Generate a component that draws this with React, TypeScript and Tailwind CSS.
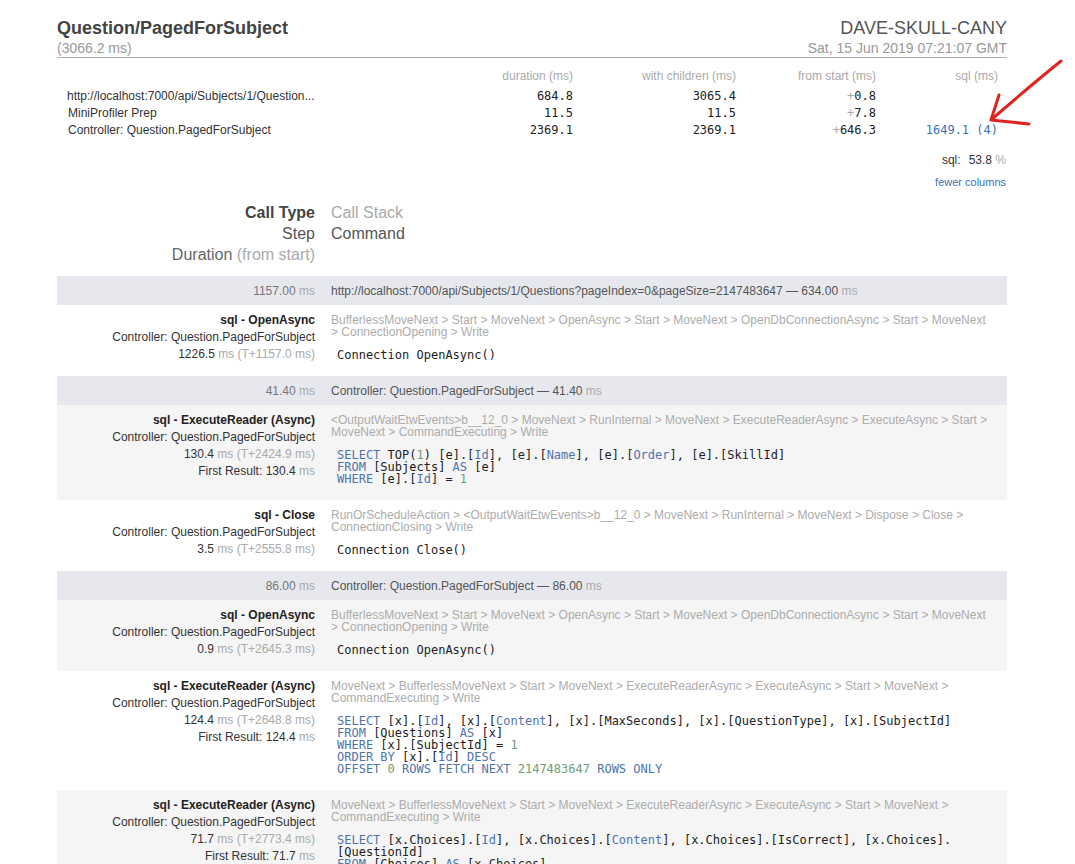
import React from "react";

const KW = new Set([
  "SELECT", "FROM", "AS", "WHERE", "ORDER", "BY", "DESC", "OFFSET", "ROWS", "FETCH", "NEXT", "ONLY",
  "Id", "Name", "Order", "Content",
]);

function CodeLine({ text }: { text: string }) {
  const parts = text.match(/[A-Za-z_]+|\d+|[^A-Za-z_\d]+/g) || [];
  return (
    <div className="whitespace-pre h-[12px]">
      {parts.map((p, i) =>
        KW.has(p) ? (
          <span key={i} className="text-[#4f74ab]">{p}</span>
        ) : /^\d+$/.test(p) ? (
          <span key={i} className="text-[#6f9d7c]">{p}</span>
        ) : (
          <span key={i}>{p}</span>
        )
      )}
    </div>
  );
}

type Header = { kind: "h"; left: string; right: string };
type Item = {
  kind: "i";
  type: string;
  dur: string;
  start: string;
  first?: string;
  stack: string[];
  code: string[];
};

const STACK_OPEN = [
  "BufferlessMoveNext > Start > MoveNext > OpenAsync > Start > MoveNext > OpenDbConnectionAsync > Start > MoveNext",
  "> ConnectionOpening > Write",
];
const STACK_EXEC = [
  "MoveNext > BufferlessMoveNext > Start > MoveNext > ExecuteReaderAsync > ExecuteAsync > Start > MoveNext >",
  "CommandExecuting > Write",
];

const rows: (Header | Item)[] = [
  {
    kind: "h",
    left: "1157.00",
    right: "http://localhost:7000/api/Subjects/1/Questions?pageIndex=0&pageSize=2147483647 \u2014 634.00",
  },
  {
    kind: "i",
    type: "sql - OpenAsync",
    dur: "1226.5",
    start: "T+1157.0",
    stack: STACK_OPEN,
    code: ["Connection OpenAsync()"],
  },
  { kind: "h", left: "41.40", right: "Controller: Question.PagedForSubject \u2014 41.40" },
  {
    kind: "i",
    type: "sql - ExecuteReader (Async)",
    dur: "130.4",
    start: "T+2424.9",
    first: "130.4",
    stack: [
      "<OutputWaitEtwEvents>b__12_0 > MoveNext > RunInternal > MoveNext > ExecuteReaderAsync > ExecuteAsync > Start >",
      "MoveNext > CommandExecuting > Write",
    ],
    code: [
      "SELECT TOP(1) [e].[Id], [e].[Name], [e].[Order], [e].[SkillId]",
      "FROM [Subjects] AS [e]",
      "WHERE [e].[Id] = 1",
    ],
  },
  {
    kind: "i",
    type: "sql - Close",
    dur: "3.5",
    start: "T+2555.8",
    stack: [
      "RunOrScheduleAction > <OutputWaitEtwEvents>b__12_0 > MoveNext > RunInternal > MoveNext > Dispose > Close >",
      "ConnectionClosing > Write",
    ],
    code: ["Connection Close()"],
  },
  { kind: "h", left: "86.00", right: "Controller: Question.PagedForSubject \u2014 86.00" },
  {
    kind: "i",
    type: "sql - OpenAsync",
    dur: "0.9",
    start: "T+2645.3",
    stack: STACK_OPEN,
    code: ["Connection OpenAsync()"],
  },
  {
    kind: "i",
    type: "sql - ExecuteReader (Async)",
    dur: "124.4",
    start: "T+2648.8",
    first: "124.4",
    stack: STACK_EXEC,
    code: [
      "SELECT [x].[Id], [x].[Content], [x].[MaxSeconds], [x].[QuestionType], [x].[SubjectId]",
      "FROM [Questions] AS [x]",
      "WHERE [x].[SubjectId] = 1",
      "ORDER BY [x].[Id] DESC",
      "OFFSET 0 ROWS FETCH NEXT 2147483647 ROWS ONLY",
    ],
  },
  {
    kind: "i",
    type: "sql - ExecuteReader (Async)",
    dur: "71.7",
    start: "T+2773.4",
    first: "71.7",
    stack: STACK_EXEC,
    code: [
      "SELECT [x.Choices].[Id], [x.Choices].[Content], [x.Choices].[IsCorrect], [x.Choices].",
      "[QuestionId]",
      "FROM [Choices] AS [x.Choices]",
      "INNER JOIN (",
      "    SELECT [x0].[Id]",
      "    FROM [Questions] AS [x0]",
    ],
  },
];

const mono = "font-['DejaVu_Sans_Mono','Liberation_Mono',monospace]";

export default function App() {
  let itemIdx = 0;
  return (
    <div className="relative min-h-screen bg-white font-['Liberation_Sans',Arial,sans-serif] text-[#333]">
      <div className="ml-[57px] w-[950px] pt-[17px] pb-[40px]">
        {/* header */}
        <div className="flex justify-between border-b border-[#a8a8a8]">
          <div>
            <div className="text-[18px] leading-[22px] font-bold text-[#444]">Question/PagedForSubject</div>
            <div className="text-[14px] leading-[18px] text-[#999]">(3066.2 ms)</div>
          </div>
          <div className="text-right">
            <div className="text-[18px] leading-[22px] text-[#555]">DAVE-SKULL-CANY</div>
            <div className="text-[14px] leading-[18px] text-[#999]">Sat, 15 Jun 2019 07:21:07 GMT</div>
          </div>
        </div>

        {/* summary table */}
        <div className="mt-[9px] pl-[10px] grid grid-cols-[416px_90px_163px_140px_122px] text-[12px]">
          <div className="leading-[18px] pb-[3px]"></div>
          <div className="leading-[18px] pb-[3px] text-right text-[#aaa]">duration (ms)</div>
          <div className="leading-[18px] pb-[3px] text-right text-[#aaa]">with children (ms)</div>
          <div className="leading-[18px] pb-[3px] text-right text-[#aaa]">from start (ms)</div>
          <div className="leading-[18px] pb-[3px] text-right text-[#aaa]">sql (ms)</div>

          <div className="leading-[17px] text-[#333]">http://localhost:7000/api/Subjects/1/Question...</div>
          <div className={`leading-[17px] text-right ${mono} text-[#222]`}>684.8</div>
          <div className={`leading-[17px] text-right ${mono} text-[#222]`}>3065.4</div>
          <div className={`leading-[17px] text-right ${mono} text-[#222]`}>
            <span className="text-[#aaa]">+</span>0.8
          </div>
          <div className="leading-[17px]"></div>

          <div className="leading-[17px] pl-[1px] text-[#333]">MiniProfiler Prep</div>
          <div className={`leading-[17px] text-right ${mono} text-[#222]`}>11.5</div>
          <div className={`leading-[17px] text-right ${mono} text-[#222]`}>11.5</div>
          <div className={`leading-[17px] text-right ${mono} text-[#222]`}>
            <span className="text-[#aaa]">+</span>7.8
          </div>
          <div className="leading-[17px]"></div>

          <div className="leading-[17px] pl-[1px] text-[#333]">Controller: Question.PagedForSubject</div>
          <div className={`leading-[17px] text-right ${mono} text-[#222]`}>2369.1</div>
          <div className={`leading-[17px] text-right ${mono} text-[#222]`}>2369.1</div>
          <div className={`leading-[17px] text-right ${mono} text-[#222]`}>
            <span className="text-[#aaa]">+</span>646.3
          </div>
          <div className={`leading-[17px] text-right ${mono} text-[#3a72b5]`}>1649.1 (4)</div>
        </div>

        <div className="mt-[13px] text-right text-[12px] leading-[16px] pr-[1px]">
          <span className="text-[#333]">sql:</span>
          <span className="ml-[8px] text-[#333]">53.8</span>
          <span className="text-[#aaa]"> %</span>
        </div>
        <div className="mt-[7px] text-right text-[11px] leading-[14px] pr-[1px] text-[#3a72b5]">fewer columns</div>

        {/* legend */}
        <div className="mt-[13px] text-[16px] leading-[21px]">
          <div className="flex">
            <div className="w-[266px] pr-[8px] text-right font-bold text-[#444]">Call Type</div>
            <div className="pl-[8px] text-[#aaa]">Call Stack</div>
          </div>
          <div className="flex">
            <div className="w-[266px] pr-[8px] text-right text-[#555]">Step</div>
            <div className="pl-[8px] text-[#555]">Command</div>
          </div>
          <div className="flex">
            <div className="w-[266px] pr-[8px] text-right text-[#666]">
              Duration <span className="text-[#aaa]">(from start)</span>
            </div>
          </div>
        </div>

        {/* timings */}
        <div className="mt-[11px] text-[12px]">
          {rows.map((r, i) => {
            if (r.kind === "h") {
              return (
                <div key={i} className="flex h-[29px] items-center bg-[#e6e8ee]">
                  <div className="w-[266px] pr-[8px] text-right text-[#777]">
                    {r.left} <span className="text-[#aaa]">ms</span>
                  </div>
                  <div className="pl-[8px] whitespace-nowrap text-[#555]">
                    {r.right} <span className="text-[#aaa]">ms</span>
                  </div>
                </div>
              );
            }
            const gray = itemIdx % 2 === 1;
            itemIdx++;
            return (
              <div key={i} className={`flex ${gray ? "bg-[#f5f5f5]" : "bg-white"}`}>
                <div className="w-[266px] shrink-0 pr-[8px] pt-[7px] text-right leading-[17px]">
                  <div className="font-bold text-[#222]">{r.type}</div>
                  <div className="text-[#333]">Controller: Question.PagedForSubject</div>
                  <div className="text-[#333]">
                    {r.dur} <span className="text-[#aaa]">ms ({r.start} ms)</span>
                  </div>
                  {r.first && (
                    <div className="text-[#333]">
                      First Result: {r.first} <span className="text-[#aaa]">ms</span>
                    </div>
                  )}
                </div>
                <div className="flex-1 pl-[8px] pt-[9px] pb-[15px]">
                  <div className="leading-[12px] text-[#acacac] whitespace-nowrap">
                    {r.stack.map((s, j) => (
                      <div key={j}>{s}</div>
                    ))}
                  </div>
                  <div className={`mt-[11px] pl-[6px] ${mono} text-[12px] leading-[12px] text-[#222]`}>
                    {r.code.map((c, j) => (
                      <CodeLine key={j} text={c} />
                    ))}
                  </div>
                </div>
              </div>
            );
          })}
        </div>
      </div>

      {/* red annotation arrow */}
      <svg
        className="absolute left-0 top-0 pointer-events-none"
        width="1075"
        height="200"
        viewBox="0 0 1075 200"
      >
        <path
          d="M1061 61 Q1030 86 992 119"
          fill="none"
          stroke="#e0231f"
          strokeWidth="3"
          strokeLinecap="round"
        />
        <path
          d="M999 95 L991 120 L1029 124"
          fill="none"
          stroke="#e0231f"
          strokeWidth="3"
          strokeLinecap="round"
          strokeLinejoin="round"
        />
      </svg>
    </div>
  );
}
